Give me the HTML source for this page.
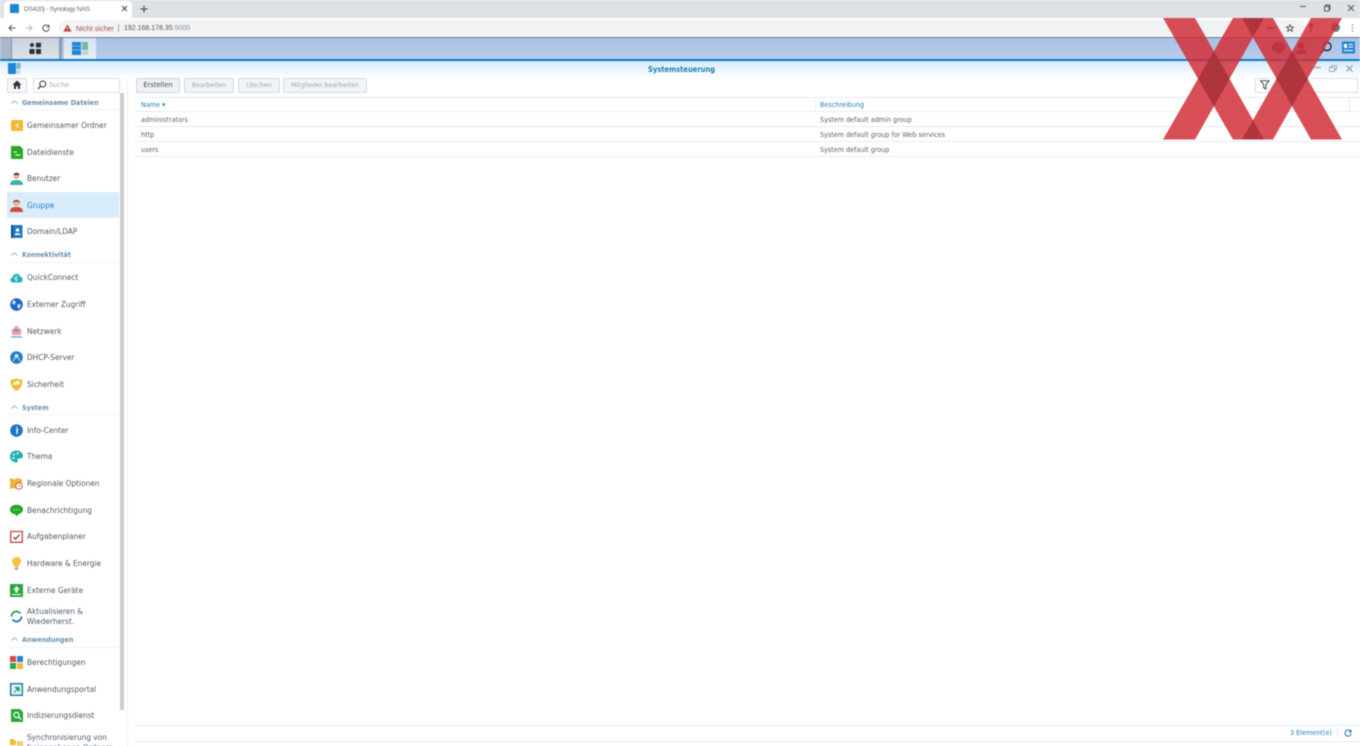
<!DOCTYPE html>
<html><head><meta charset="utf-8"><title>DS420j - Synology NAS</title>
<style>
html,body{margin:0;padding:0;width:1360px;height:746px;overflow:hidden;background:#fff}
#r{position:relative;width:1360px;height:746px;overflow:hidden;filter:blur(.4px);font-family:"DejaVu Sans",sans-serif}
#r div,#r svg{position:absolute}
.t{white-space:nowrap;height:12px;line-height:12px;font-size:8.2px;color:#4f5a68;transform:scaleX(.9);transform-origin:0 50%}
.b{left:27px;margin-top:-.5px}
.h{left:22px;font-size:7.1px;font-weight:bold;color:#6a90ad;margin-top:.5px}
.l{left:9px;width:110px;height:1px;background:#eef1f4}
.c{left:10px;width:13px;height:13px}
.d{font-size:7.17px;color:#5a636d;margin-top:.5px}
.rl{left:136px;width:1224px;height:1px;background:#e8ebee}
.btn{top:78px;height:13px;border:1px solid #d4dbe2;border-radius:2px;background:#f1f4f7;text-align:center;line-height:13px;font-size:6.3px;color:#9aa7b2;white-space:nowrap}
.ch{left:11px;width:7px;height:4px}
.ch2{font-family:"Liberation Sans",sans-serif;transform:none}
</style></head><body><div id="r">

<!-- Chrome tab strip -->
<div style="left:0;top:0;width:1360px;height:18px;background:#dee1e6"></div>
<div style="left:4px;top:1px;width:128px;height:17px;background:#fff;border-radius:4px 4px 0 0"></div>
<div style="left:10px;top:4px;width:9px;height:9px;background:#1c86cf"></div>
<div class="t ch2" style="left:24px;top:3px;margin-top:1px;font-size:6.8px;letter-spacing:-.3px;color:#666b72">DS420j - Synology NAS</div>
<svg style="left:121px;top:5px" width="7" height="7"><path d="M1 1L6 6M6 1L1 6" stroke="#444" stroke-width="1"/></svg>
<svg style="left:140px;top:5px" width="8" height="8"><path d="M4 .5V7.5M.5 4H7.5" stroke="#444" stroke-width="1.1"/></svg>
<svg style="left:1299px;top:6px" width="8" height="2"><path d="M1 .5H7" stroke="#555"/></svg>
<svg style="left:1323px;top:4px" width="8" height="8"><path d="M1.5 2.5h4.5v4.5h-4.5zM2.5 2.5V1H7v4.5H6" fill="none" stroke="#555" stroke-width=".9"/></svg>
<svg style="left:1347px;top:4px" width="8" height="8"><path d="M1 1L7 7M7 1L1 7" stroke="#555"/></svg>

<!-- Chrome toolbar -->
<div style="left:0;top:18px;width:1360px;height:20px;background:#fff"></div>
<div style="left:59px;top:20px;width:1248px;height:16px;border-radius:8px;background:#f1f3f4"></div>
<svg style="left:8px;top:24px" width="8" height="8"><path d="M7.5 4H1M4 1L1 4L4 7" fill="none" stroke="#555" stroke-width="1"/></svg>
<svg style="left:25px;top:24px" width="8" height="8"><path d="M.5 4H7M4 1L7 4L4 7" fill="none" stroke="#bbb" stroke-width="1"/></svg>
<svg style="left:42px;top:24px" width="8" height="8"><path d="M6.8 2.6A3.2 3.2 0 1 0 7.2 4.4M7 .8V3H4.8" fill="none" stroke="#555" stroke-width="1"/></svg>
<svg style="left:63px;top:24px" width="9" height="8"><path d="M4.5 .5L8.5 7.5H.5Z" fill="#b5383c"/><path d="M4.5 3V5.2M4.5 6V6.8" stroke="#fff" stroke-width=".8"/></svg>
<div class="t ch2" style="left:76px;top:22.500px;font-size:7.3px;color:#a94a4e">Nicht sicher</div>
<div style="left:118px;top:24px;width:1px;height:8px;background:#aaa"></div>
<div class="t ch2" style="left:124px;top:22.500px;font-size:7px;color:#50545a">192.168.178.35<span style="color:#8a9096">:5000</span></div>
<svg style="left:1286px;top:24px" width="8" height="8"><path d="M4 .6L5 3H7.6L5.5 4.6L6.3 7.3L4 5.7L1.7 7.3L2.5 4.6L.4 3H3Z" fill="none" stroke="#444" stroke-width=".8"/></svg>
<svg style="left:1308px;top:22px" width="6" height="11"><circle cx="3" cy="3" r="2" fill="#555"/><path d="M3 4V10" stroke="#555" stroke-width="1.2"/></svg>
<div style="left:1267px;top:27px;width:8px;height:2px;background:#8a6066"></div>
<div style="left:1331px;top:23px;width:9px;height:9px;border-radius:50%;background:#6f747c"></div>
<svg style="left:1351px;top:24px" width="3" height="9"><path d="M1.5 .5v1M1.5 3.5v1M1.5 6.5v1" stroke="#444" stroke-width="1.1"/></svg>

<!-- DSM taskbar -->
<div style="left:0;top:37px;width:1360px;height:1px;background:#6d7888"></div>
<div style="left:0;top:38px;width:1360px;height:21px;background:linear-gradient(#a9c1e5,#b8cdec)"></div>
<div style="left:0;top:59px;width:1360px;height:1.5px;background:#1279c4"></div>
<div style="left:0;top:38px;width:11px;height:21px;background:#aab8cc"></div>
<div style="left:11px;top:38px;width:47px;height:21px;background:linear-gradient(#ccd3dd,#dde2e8);border-left:1px solid #7f8ea3"></div>
<div style="left:59px;top:38px;width:3px;height:21px;background:#8d9db3"></div>
<div style="left:64px;top:38px;width:32px;height:21px;background:linear-gradient(#d4e3f5,#e6eff9)"></div>
<svg style="left:29px;top:42px" width="13" height="13"><path d="M3 .5L5.5 3L3 5.5L.5 3Z" fill="#283038"/><rect x="7" y=".8" width="5" height="4.6" rx=".6" fill="#283038"/><rect x=".5" y="7" width="5" height="5" rx=".6" fill="#283038"/><rect x="7" y="7" width="5" height="5" rx=".6" fill="#283038"/></svg>
<svg style="left:72px;top:41px" width="17" height="15"><rect x="0" y="1" width="9" height="13" fill="#1f86d6"/><path d="M0 5H9M0 9H9" stroke="#bfe0f6" stroke-width=".6"/><rect x="10" y="1" width="6" height="8" fill="#77b7a8"/><rect x="10" y="10" width="6" height="4" fill="#c3d3dd"/></svg>
<svg style="left:1271px;top:41px" width="15" height="14"><path d="M7.5 1C3.800 1 1 3.200 1 6.200C1 9.200 3.500 11.300 7 11.300L7.500 13.500L10.500 10.700C12.400 9.800 14 8.200 14 6.200C14 3.200 11.200 1 7.500 1Z" fill="#5a606a"/><path d="M4.500 6.200H5.500M7 6.200H8M9.500 6.200H10.500" stroke="#fff" stroke-width="1"/></svg>
<svg style="left:1294px;top:41px" width="14" height="14"><circle cx="7" cy="4.500" r="3.300" fill="#5a606a"/><path d="M1 13C1 9.500 4 8.500 7 8.500S13 9.500 13 13Z" fill="#5a606a"/></svg>
<svg style="left:1319px;top:41px" width="14" height="14"><circle cx="8" cy="5.500" r="4" fill="none" stroke="#20262e" stroke-width="1.400"/><path d="M5 8.500L1.500 12.500" stroke="#20262e" stroke-width="1.600"/></svg>
<svg style="left:1342px;top:41px" width="13" height="13"><rect x="0" y=".5" width="13" height="12" fill="#2a84d0"/><rect x="2" y="3" width="3" height="4" fill="#fff"/><path d="M6.500 3.500H11M6.500 6H11M2 9.500H11" stroke="#fff"/></svg>

<!-- Window header -->
<div style="left:0;top:60.500px;width:1360px;height:17px;background:linear-gradient(#d6ebfb,#fff)"></div>
<svg style="left:8px;top:63px" width="13" height="12"><rect x="0" y="0" width="8" height="11" fill="#1f86d6"/><rect x="8.500" y="0" width="4" height="6" fill="#76b6c8"/><rect x="8.500" y="7" width="4" height="4" fill="#c8d8e2"/></svg>
<div class="t" style="left:648px;top:63.500px;font-size:7.500px;font-weight:bold;color:#1f80ae">Systemsteuerung</div>
<svg style="left:1297px;top:65px" width="6" height="7"><path d="M1 2C1 .5 5 .5 5 2C5 3.500 3 3.300 3 5M3 6V7" fill="none" stroke="#8a97a3" stroke-width=".8"/></svg>
<svg style="left:1314px;top:67px" width="7" height="2"><path d="M0 .5H7" stroke="#8a97a3"/></svg>
<svg style="left:1329px;top:65px" width="8" height="7"><path d="M.5 2.500H5.500V6.500H.5ZM2.500 2.500V.5H7.500V4.500H5.500" fill="none" stroke="#8a97a3" stroke-width=".8"/></svg>
<svg style="left:1346px;top:65px" width="7" height="7"><path d="M.5 .5L6.500 6.500M6.500 .5L.5 6.500" stroke="#7f8f9b" stroke-width=".9"/></svg>

<!-- Sidebar top -->
<div style="left:7px;top:78px;width:18px;height:13px;border:1px solid #d4dbe2;border-radius:2px;background:#f6f8fa"></div>
<svg style="left:12px;top:80px" width="10" height="10"><path d="M5 .5L9.500 4.800H8V9H6V6.200H4V9H2V4.800H.5Z" fill="#2d3540"/></svg>
<div style="left:33px;top:78px;width:85px;height:13px;border:1px solid #d9dfe5;background:#fff;border-radius:1px"></div>
<svg style="left:37px;top:80px" width="10" height="10"><circle cx="5.800" cy="4" r="3" fill="none" stroke="#38414c" stroke-width="1.100"/><path d="M3.500 6.200L1 9" stroke="#38414c" stroke-width="1.300"/></svg>
<div class="t" style="left:49px;top:79px;font-size:7.300px;color:#a3aeb8">Suche</div>

<!-- Sidebar scrollbar -->
<div style="left:120px;top:93px;width:4px;height:617px;background:#c9ccd0"></div>
<div style="left:127px;top:78px;width:1px;height:668px;background:#eef0f3"></div>

<!-- Selected -->
<div style="left:7px;top:192px;width:112px;height:26px;background:#d9ecfa"></div>

<!-- Section headers -->
<svg class="ch" style="top:100px" viewBox="0 0 7 4"><path d="M.5 3.500L3.500 .8L6.500 3.500" fill="none" stroke="#7f8a94" stroke-width=".7"/></svg>
<div class="t h" style="top:96px">Gemeinsame Dateien</div><div class="l" style="top:109px"></div>
<svg class="ch" style="top:252px" viewBox="0 0 7 4"><path d="M.5 3.500L3.500 .8L6.500 3.500" fill="none" stroke="#7f8a94" stroke-width=".7"/></svg>
<div class="t h" style="top:248px">Konnektivität</div><div class="l" style="top:262px"></div>
<svg class="ch" style="top:405px" viewBox="0 0 7 4"><path d="M.5 3.500L3.500 .8L6.500 3.500" fill="none" stroke="#7f8a94" stroke-width=".7"/></svg>
<div class="t h" style="top:401px">System</div><div class="l" style="top:414px"></div>
<svg class="ch" style="top:637px" viewBox="0 0 7 4"><path d="M.5 3.500L3.500 .8L6.500 3.500" fill="none" stroke="#7f8a94" stroke-width=".7"/></svg>
<div class="t h" style="top:633px">Anwendungen</div><div class="l" style="top:647px"></div>

<!-- Sidebar items -->
<div class="t b" style="top:119px">Gemeinsamer Ordner</div>
<svg class="c" style="top:119px" viewBox="0 0 13 13"><rect x="1" y="1" width="12" height="11" rx="1.500" fill="#f5b731"/><path d="M5.500 6.500L9 5M5.500 6.500L9 8.500" stroke="#fff" stroke-width="1"/></svg>
<div class="t b" style="top:146px">Dateidienste</div>
<svg class="c" style="top:146px" viewBox="0 0 13 13"><path d="M1 0H10L13 3V13H1Z" fill="#27a827"/><path d="M3.500 6H7M5 9H10.500" stroke="#d8f5c8" stroke-width="1.200"/></svg>
<div class="t b" style="top:172px">Benutzer</div>
<svg class="c" style="top:172px" viewBox="0 0 13 13"><circle cx="6.500" cy="4" r="3" fill="#f0b48c"/><path d="M3.500 3C3.500 0 9.500 0 9.500 3Z" fill="#5b3a22"/><path d="M0 13C0 9 3 8 6.500 8S13 9 13 13Z" fill="#3fb2a8"/></svg>
<div class="t b" style="top:199px;color:#1b7fb8">Gruppe</div>
<svg class="c" style="top:199px" viewBox="0 0 13 13"><circle cx="6.500" cy="4.200" r="3" fill="#f0b48c"/><path d="M3 4C3 0 10 0 10 4L8 2.500H5Z" fill="#5b3a22"/><path d="M0 13C0 9 3 8 6.500 8S13 9 13 13Z" fill="#d04848"/></svg>
<div class="t b" style="top:225px">Domain/LDAP</div>
<svg class="c" style="top:225px" viewBox="0 0 13 13"><rect x="1" y="0" width="11.500" height="13" fill="#1c7ac4"/><rect x="1" y="0" width="2" height="13" fill="#12507f"/><circle cx="7.500" cy="5" r="1.800" fill="#fff"/><path d="M4.500 10C4.500 7.500 10.500 7.500 10.500 10Z" fill="#fff"/></svg>
<div class="t b" style="top:271px">QuickConnect</div>
<svg class="c" style="top:271px" viewBox="0 0 13 13"><path d="M3 11.500C-.5 11.500 -.500 6.500 2.500 6.500C3 2 9.500 1.500 10 5.500C13.500 6 13.500 11.500 10 11.500Z" fill="#22b3b6"/><path d="M7 4.500L5 8H7L6 10.500" stroke="#d5f5f5" fill="none"/></svg>
<div class="t b" style="top:298px">Externer Zugriff</div>
<svg class="c" style="top:298px" viewBox="0 0 13 13"><circle cx="6.500" cy="6.500" r="6.300" fill="#1c69b8"/><path d="M3 2L6 3.500L5 6.500L2 6ZM7.500 6L11 6.500L9.500 10.500L7.500 10Z" fill="#c8e0f5"/></svg>
<div class="t b" style="top:325px">Netzwerk</div>
<svg class="c" style="top:325px" viewBox="0 0 13 13"><path d="M6.500 .5L12.500 6H11V10H2V6H.5Z" fill="#e6a0a8"/><path d="M4.500 6C6 4.800 7 4.800 8.500 6" stroke="#3d7db5" fill="none"/><path d="M1 12H12" stroke="#4aa0d8" stroke-width="1.200"/></svg>
<div class="t b" style="top:351px">DHCP-Server</div>
<svg class="c" style="top:351px" viewBox="0 0 13 13"><circle cx="6.500" cy="6.500" r="6.300" fill="#2679c0"/><circle cx="6.500" cy="5" r="2" fill="#cfe6f8"/><path d="M3 10L5 7M10 10L8 7" stroke="#cfe6f8"/></svg>
<div class="t b" style="top:378px">Sicherheit</div>
<svg class="c" style="top:378px" viewBox="0 0 13 13"><path d="M.5 1.500C3 1.500 5 1 6.500 .2C8 1 10 1.500 12.500 1.500C12.500 7 11 10.500 6.500 13C2 10.500 .5 7 .5 1.500Z" fill="#ecba3d"/><path d="M6.500 3H10C10 6 9 7 6.500 7H3C3 5 4 3 6.500 3Z" fill="#fff1c0"/></svg>
<div class="t b" style="top:424px">Info-Center</div>
<svg class="c" style="top:424px" viewBox="0 0 13 13"><circle cx="6.500" cy="6.500" r="6.300" fill="#1b74c8"/><path d="M6 5.500H7.500L6.800 10M6.800 2.500V3.800" stroke="#fff" stroke-width="1.400" fill="none"/></svg>
<div class="t b" style="top:450px">Thema</div>
<svg class="c" style="top:450px" viewBox="0 0 13 13"><path d="M6.500 .5C2.500 .5 0 3 0 6.500C0 10 3 12.500 6.500 12.500C8 12.500 8 11 7.500 10C7 8.500 9 8.500 10.500 8.500C12.500 8.500 13 7 13 6C13 3 10 .5 6.500 .5Z" fill="#1fb0b2"/><circle cx="4" cy="4.500" r="1.100" fill="#d5f5f5"/><circle cx="7.500" cy="3.500" r="1.100" fill="#d5f5f5"/><circle cx="3.500" cy="8" r="1.100" fill="#d5f5f5"/></svg>
<div class="t b" style="top:477px">Regionale Optionen</div>
<svg class="c" style="top:477px" viewBox="0 0 13 13"><path d="M0 1L4 2.500L8 1L12 2.500V7H7V12L4 11L0 12Z" fill="#eeb33c"/><circle cx="9" cy="9" r="3.300" fill="#fff" stroke="#d9534f" stroke-width="1"/><path d="M9 7.500V9H10.300" stroke="#d9534f" stroke-width=".7" fill="none"/></svg>
<div class="t b" style="top:504px">Benachrichtigung</div>
<svg class="c" style="top:504px" viewBox="0 0 13 13"><path d="M6.500 .8C2.800 .8 0 2.900 0 5.600C0 8.300 2.800 10.300 5.500 10.300L6.500 12.500L8.800 10C11.200 9.400 13 7.700 13 5.600C13 2.900 10.200 .8 6.500 .8Z" fill="#24a524"/><path d="M3.500 5.600H4.500M6 5.600H7M8.500 5.600H9.500" stroke="#fff" stroke-width="1.100"/></svg>
<div class="t b" style="top:530px">Aufgabenplaner</div>
<svg class="c" style="top:530px" viewBox="0 0 13 13"><rect x=".7" y="1.500" width="11.600" height="10.800" fill="#fff" stroke="#cf4a58" stroke-width="1.400"/><path d="M3.500 7L5.500 9.200L9.500 4.500" fill="none" stroke="#3c4652" stroke-width="1.200"/></svg>
<div class="t b" style="top:557px">Hardware &amp; Energie</div>
<svg class="c" style="top:557px" viewBox="0 0 13 13"><path d="M6.500 0C3.500 0 2 2.200 2 4.300C2 6.500 4 7.500 4.500 10H8.500C9 7.500 11 6.500 11 4.300C11 2.200 9.500 0 6.500 0Z" fill="#f4c23b"/><rect x="4.800" y="10.500" width="3.400" height="2.300" fill="#9fa7ae"/></svg>
<div class="t b" style="top:584px">Externe Geräte</div>
<svg class="c" style="top:584px" viewBox="0 0 13 13"><rect x="0" y="0" width="13" height="13" fill="#27a83a"/><path d="M6.500 2L9.800 5.800H7.700V8.500H5.300V5.800H3.200Z" fill="#fff"/><path d="M2 10.500H11" stroke="#fff" stroke-width="1"/></svg>
<div class="t b" style="top:605px">Aktualisieren &amp;</div>
<div class="t b" style="top:615.500px">Wiederherst.</div>
<svg class="c" style="top:610px" viewBox="0 0 13 13"><path d="M1.500 6.500A5 5 0 0 1 10.500 3.500" fill="none" stroke="#2aa04a" stroke-width="1.900"/><path d="M11.500 6.500A5 5 0 0 1 2.500 9.500" fill="none" stroke="#1c78c8" stroke-width="1.900"/></svg>
<div class="t b" style="top:656px">Berechtigungen</div>
<svg class="c" style="top:656px" viewBox="0 0 13 13"><rect x="0" y="0" width="6" height="6" fill="#d9484e"/><rect x="7" y="0" width="6" height="6" fill="#2c7fd0"/><rect x="0" y="7" width="6" height="6" fill="#2aa648"/><rect x="7" y="7" width="6" height="6" fill="#f0b83a"/></svg>
<div class="t b" style="top:683px">Anwendungsportal</div>
<svg class="c" style="top:683px" viewBox="0 0 13 13"><rect x=".7" y=".7" width="11.600" height="11.600" fill="#dff3f5" stroke="#1b76a8" stroke-width="1.400"/><path d="M4 9.500L8 5.500M5.500 4.500H9V8Z" stroke="#1a9a5a" fill="#1a9a5a"/></svg>
<div class="t b" style="top:709px">Indizierungsdienst</div>
<svg class="c" style="top:709px" viewBox="0 0 13 13"><path d="M1 0H10L13 3V13H1Z" fill="#28a83a"/><circle cx="6.500" cy="6" r="2.600" fill="none" stroke="#fff" stroke-width="1.200"/><path d="M8.500 8L11 10.500" stroke="#fff" stroke-width="1.300"/></svg>
<div class="t b" style="top:731px">Synchronisierung von</div>
<div class="t b" style="top:741.500px">freigegebenen Ordnern</div>
<svg class="c" style="top:736px" viewBox="0 0 13 13"><path d="M0 3H3.500L5 4.500H6V9H0Z" fill="#ecbb3d"/><path d="M7 5H13V10H7Z" fill="#ecd270"/><path d="M2 10.500H5V13H2Z" fill="#2aa648"/></svg>

<!-- Toolbar buttons -->
<div class="btn" style="left:136px;width:42px;color:#3e4852;background:#eef2f5;border-color:#ccd4db;font-size:6.7px">Erstellen</div>
<div class="btn" style="left:184px;width:48px">Bearbeiten</div>
<div class="btn" style="left:238px;width:40px">Löschen</div>
<div class="btn" style="left:283px;width:82px">Mitglieder bearbeiten</div>

<!-- Filter -->
<div style="left:1255px;top:78px;width:101px;height:13px;border:1px solid #d9dfe5;background:#fff"></div>
<svg style="left:1260px;top:80px" width="10" height="10"><path d="M.5 .8H9L6 4.500V9L3.700 7.800V4.500Z" fill="none" stroke="#2e3640" stroke-width=".9"/></svg>
<div class="t" style="left:1280px;top:79px;font-size:7.300px;color:#a3aeb8">Suche</div>

<!-- Grid -->
<div class="rl" style="top:97px"></div>
<div class="rl" style="top:111px"></div>
<div class="rl" style="top:126px"></div>
<div class="rl" style="top:141px"></div>
<div class="rl" style="top:156px"></div>
<div style="left:815px;top:98px;width:1px;height:13px;background:#eef0f3"></div>
<div style="left:1349px;top:98px;width:1px;height:13px;background:#e4e7ea"></div>
<div class="t d" style="left:141px;top:98px;color:#2283b8">Name ▾</div>
<div class="t d" style="left:820px;top:98px;color:#2283b8">Beschreibung</div>
<div class="t d" style="left:141px;top:113px">administrators</div>
<div class="t d" style="left:820px;top:113px">System default admin group</div>
<div class="t d" style="left:141px;top:128px">http</div>
<div class="t d" style="left:820px;top:128px">System default group for Web services</div>
<div class="t d" style="left:141px;top:143px">users</div>
<div class="t d" style="left:820px;top:143px">System default group</div>

<!-- Footer -->
<div class="rl" style="top:725px"></div>
<div class="rl" style="top:741px"></div>
<div class="t d" style="left:1290px;top:726px;color:#2283b8">3 Element(e)</div>
<div style="left:1337px;top:727px;width:1px;height:11px;background:#e4e7ea"></div>
<svg style="left:1344px;top:729px" width="8" height="8"><path d="M6.800 2.500A3.100 3.100 0 1 0 7.200 4.500M7 .8V3H4.800" fill="none" stroke="#1a7ab0" stroke-width="1"/></svg>

<!-- Red XX overlay -->
<svg style="left:0;top:0" width="1360" height="746">
<g fill="rgb(210,45,55)" fill-opacity=".84">
<path d="M1163 18H1195L1264 139.500H1233Z"/>
<path d="M1233 18H1264L1195 139.500H1163Z"/>
<path d="M1242 18H1273L1342 139.500H1311Z"/>
<path d="M1311 18H1342L1273 139.500H1242Z"/>
</g>
<g fill="rgb(70,60,60)" fill-opacity=".26">
<path d="M1214 51L1230 78.500L1214 106L1198 78.500Z"/>
<path d="M1292 51L1308 78.500L1292 106L1276 78.500Z"/>
<path d="M1242 18H1264L1253 37Z"/>
<path d="M1242 139.500H1264L1253 120.500Z"/>
</g>
</svg>
</div></body></html>
